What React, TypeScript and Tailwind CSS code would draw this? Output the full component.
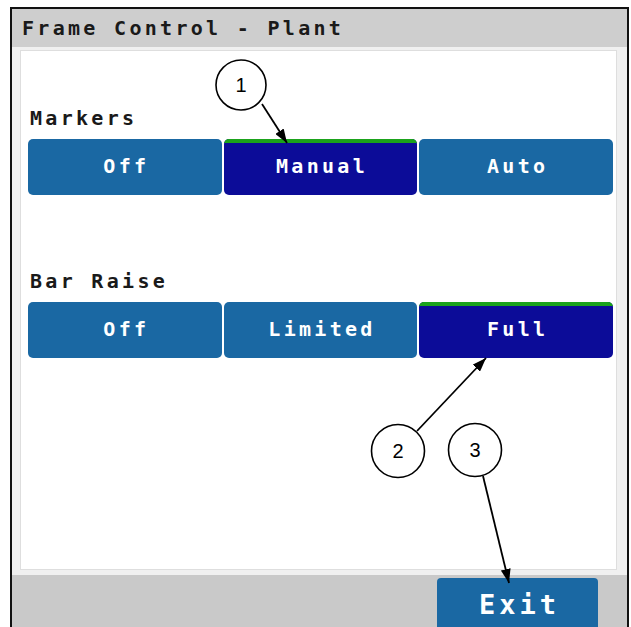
import React from "react";

const mono = "font-['DejaVu_Sans_Mono',monospace] font-bold";

type Opt = { label: string; active?: boolean };

const OptionRow = ({ options }: { options: Opt[] }) => {
  return (
    <div className="grid grid-cols-3 gap-[2px] w-[585px]">
      {options.map((o) => (
        <div
          key={o.label}
          className={
            "relative h-[56px] rounded-[5px] flex items-center justify-center overflow-hidden " +
            (o.active ? "bg-[#0c0c98]" : "bg-[#1a68a3]")
          }
        >
          {o.active && <div className="absolute top-0 left-0 right-0 h-[4px] bg-[#1ba31b]" />}
          <span className={`${mono} text-white text-[20px] tracking-[3.3px] pl-[3px] mb-[3px]`}>{o.label}</span>
        </div>
      ))}
    </div>
  );
};

const Callouts = () => {
  return (
    <svg className="absolute inset-0 pointer-events-none" width="631" height="627" viewBox="0 0 631 627">
      <defs>
        <marker id="head" viewBox="0 0 14 10" refX="14" refY="5" markerWidth="14" markerHeight="10" markerUnits="userSpaceOnUse" orient="auto">
          <path d="M0 0 L14 5 L0 10 Z" fill="black" />
        </marker>
      </defs>
      <g fill="white" stroke="black" strokeWidth="1.6">
        <circle cx="241" cy="85" r="25" />
        <circle cx="398" cy="451" r="26.5" />
        <circle cx="475" cy="450" r="26.5" />
      </g>
      <g stroke="black" strokeWidth="1.8" markerEnd="url(#head)">
        <line x1="262" y1="104" x2="287" y2="143" />
        <line x1="417" y1="431" x2="486" y2="358" />
        <line x1="483" y1="476" x2="509" y2="583" />
      </g>
      <g fontFamily="'Liberation Sans', Arial, sans-serif" fontSize="20" textAnchor="middle" fill="black">
        <text x="241" y="92">1</text>
        <text x="398" y="458">2</text>
        <text x="475" y="457">3</text>
      </g>
    </svg>
  );
};

export default function App() {
  return (
    <div className="relative w-[631px] h-[627px] bg-white overflow-hidden">
      <div className="ml-[10px] mt-[7px] w-[619px] h-[622px] border-2 border-b-0 border-[#111] flex flex-col bg-[#f0f0f0]">
        <div className="h-[38px] bg-[#cecece] flex items-center px-[10px]">
          <span className={`${mono} text-[#1a1a1a] text-[20px] tracking-[3.3px]`}>Frame Control - Plant</span>
        </div>
        <div className="flex-1 mt-[3px] ml-[8px] mr-[10px] mb-[5px] bg-white border border-[#dedede] px-[7px] flex flex-col">
          <div className={`${mono} text-[#1a1a1a] text-[20px] tracking-[3.3px] leading-[22px] mt-[56px] ml-[2px]`}>Markers</div>
          <div className="mt-[10px]">
            <OptionRow options={[{ label: "Off" }, { label: "Manual", active: true }, { label: "Auto" }]} />
          </div>
          <div className={`${mono} text-[#1a1a1a] text-[20px] tracking-[3.3px] leading-[22px] mt-[75px] ml-[2px]`}>Bar Raise</div>
          <div className="mt-[10px]">
            <OptionRow options={[{ label: "Off" }, { label: "Limited" }, { label: "Full", active: true }]} />
          </div>
        </div>
        <div className="h-[54px] bg-[#c9c9c9] flex justify-end pr-[29px] pt-[3px]">
          <div className="w-[161px] h-[54px] bg-[#1a68a3] rounded-[4px] flex justify-center pt-[11px]">
            <span className={`${mono} text-white text-[27px] tracking-[4px] pl-[4px] leading-[32px]`}>Exit</span>
          </div>
        </div>
      </div>
      <Callouts />
    </div>
  );
}
